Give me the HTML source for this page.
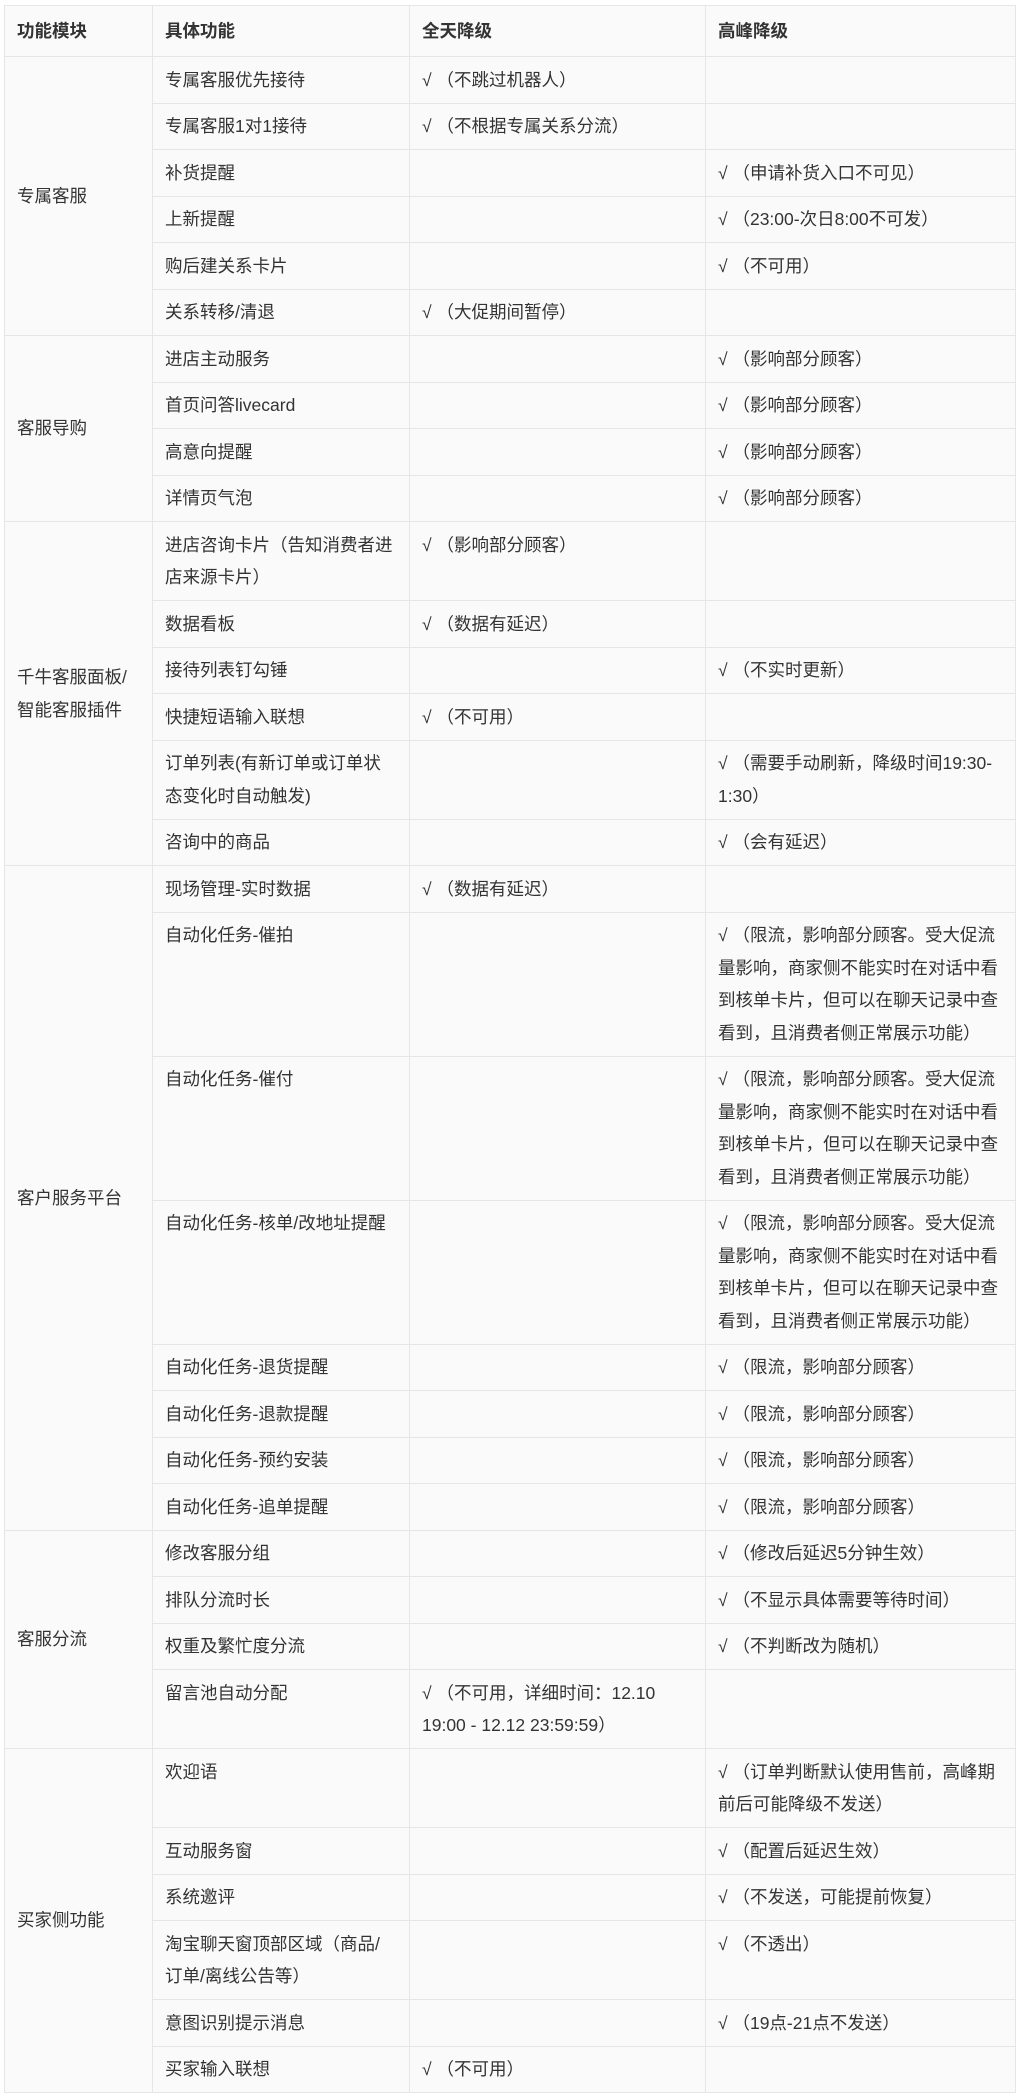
<!DOCTYPE html>
<html><head><meta charset="utf-8"><style>
html,body{margin:0;padding:0;background:#fff;}
body{width:1017px;height:2084px;overflow:hidden;}
table{position:absolute;left:4px;top:5px;border-collapse:collapse;width:1011px;table-layout:fixed;font-family:"Liberation Sans","Noto Sans CJK SC",sans-serif;font-size:17.5px;color:#333;background:#fafafa;}
td,th{border:1px solid #e6e6e6;padding:6.5px 12px;line-height:32.5px;vertical-align:top;text-align:left;word-break:normal;overflow-wrap:break-word;}
th{font-weight:bold;height:32px;line-height:24px;vertical-align:middle;padding:9px 12px;}
td.m{vertical-align:middle;}
</style></head><body>
<table>
<colgroup><col style="width:148px"><col style="width:257px"><col style="width:296px"><col style="width:310px"></colgroup>
<tr><th>功能模块</th><th>具体功能</th><th>全天降级</th><th>高峰降级</th></tr>
<tr><td class="m" rowspan="6">专属客服</td><td>专属客服优先接待</td><td>√ （不跳过机器人）</td><td></td></tr>
<tr><td>专属客服1对1接待</td><td>√ （不根据专属关系分流）</td><td></td></tr>
<tr><td>补货提醒</td><td></td><td>√ （申请补货入口不可见）</td></tr>
<tr><td>上新提醒</td><td></td><td>√ （23:00-次日8:00不可发）</td></tr>
<tr><td>购后建关系卡片</td><td></td><td>√ （不可用）</td></tr>
<tr><td>关系转移/清退</td><td>√ （大促期间暂停）</td><td></td></tr>
<tr><td class="m" rowspan="4">客服导购</td><td>进店主动服务</td><td></td><td>√ （影响部分顾客）</td></tr>
<tr><td>首页问答livecard</td><td></td><td>√ （影响部分顾客）</td></tr>
<tr><td>高意向提醒</td><td></td><td>√ （影响部分顾客）</td></tr>
<tr><td>详情页气泡</td><td></td><td>√ （影响部分顾客）</td></tr>
<tr><td class="m" rowspan="6">千牛客服面板/智能客服插件</td><td>进店咨询卡片（告知消费者进店来源卡片）</td><td>√ （影响部分顾客）</td><td></td></tr>
<tr><td>数据看板</td><td>√ （数据有延迟）</td><td></td></tr>
<tr><td>接待列表钉勾锤</td><td></td><td>√ （不实时更新）</td></tr>
<tr><td>快捷短语输入联想</td><td>√ （不可用）</td><td></td></tr>
<tr><td>订单列表(有新订单或订单状态变化时自动触发)</td><td></td><td>√ （需要手动刷新，降级时间19:30-<br>1:30）</td></tr>
<tr><td>咨询中的商品</td><td></td><td>√ （会有延迟）</td></tr>
<tr><td class="m" rowspan="8">客户服务平台</td><td>现场管理-实时数据</td><td>√ （数据有延迟）</td><td></td></tr>
<tr><td>自动化任务-催拍</td><td></td><td>√ （限流，影响部分顾客。受大促流量影响，商家侧不能实时在对话中看到核单卡片，但可以在聊天记录中查看到，且消费者侧正常展示功能）</td></tr>
<tr><td>自动化任务-催付</td><td></td><td>√ （限流，影响部分顾客。受大促流量影响，商家侧不能实时在对话中看到核单卡片，但可以在聊天记录中查看到，且消费者侧正常展示功能）</td></tr>
<tr><td>自动化任务-核单/改地址提醒</td><td></td><td>√ （限流，影响部分顾客。受大促流量影响，商家侧不能实时在对话中看到核单卡片，但可以在聊天记录中查看到，且消费者侧正常展示功能）</td></tr>
<tr><td>自动化任务-退货提醒</td><td></td><td>√ （限流，影响部分顾客）</td></tr>
<tr><td>自动化任务-退款提醒</td><td></td><td>√ （限流，影响部分顾客）</td></tr>
<tr><td>自动化任务-预约安装</td><td></td><td>√ （限流，影响部分顾客）</td></tr>
<tr><td>自动化任务-追单提醒</td><td></td><td>√ （限流，影响部分顾客）</td></tr>
<tr><td class="m" rowspan="4">客服分流</td><td>修改客服分组</td><td></td><td>√ （修改后延迟5分钟生效）</td></tr>
<tr><td>排队分流时长</td><td></td><td>√ （不显示具体需要等待时间）</td></tr>
<tr><td>权重及繁忙度分流</td><td></td><td>√ （不判断改为随机）</td></tr>
<tr><td>留言池自动分配</td><td>√ （不可用，详细时间：12.10<br>19:00 - 12.12 23:59:59）</td><td></td></tr>
<tr><td class="m" rowspan="6">买家侧功能</td><td>欢迎语</td><td></td><td>√ （订单判断默认使用售前，高峰期前后可能降级不发送）</td></tr>
<tr><td>互动服务窗</td><td></td><td>√ （配置后延迟生效）</td></tr>
<tr><td>系统邀评</td><td></td><td>√ （不发送，可能提前恢复）</td></tr>
<tr><td>淘宝聊天窗顶部区域（商品/订单/离线公告等）</td><td></td><td>√ （不透出）</td></tr>
<tr><td>意图识别提示消息</td><td></td><td>√ （19点-21点不发送）</td></tr>
<tr><td>买家输入联想</td><td>√ （不可用）</td><td></td></tr>
</table>
</body></html>
